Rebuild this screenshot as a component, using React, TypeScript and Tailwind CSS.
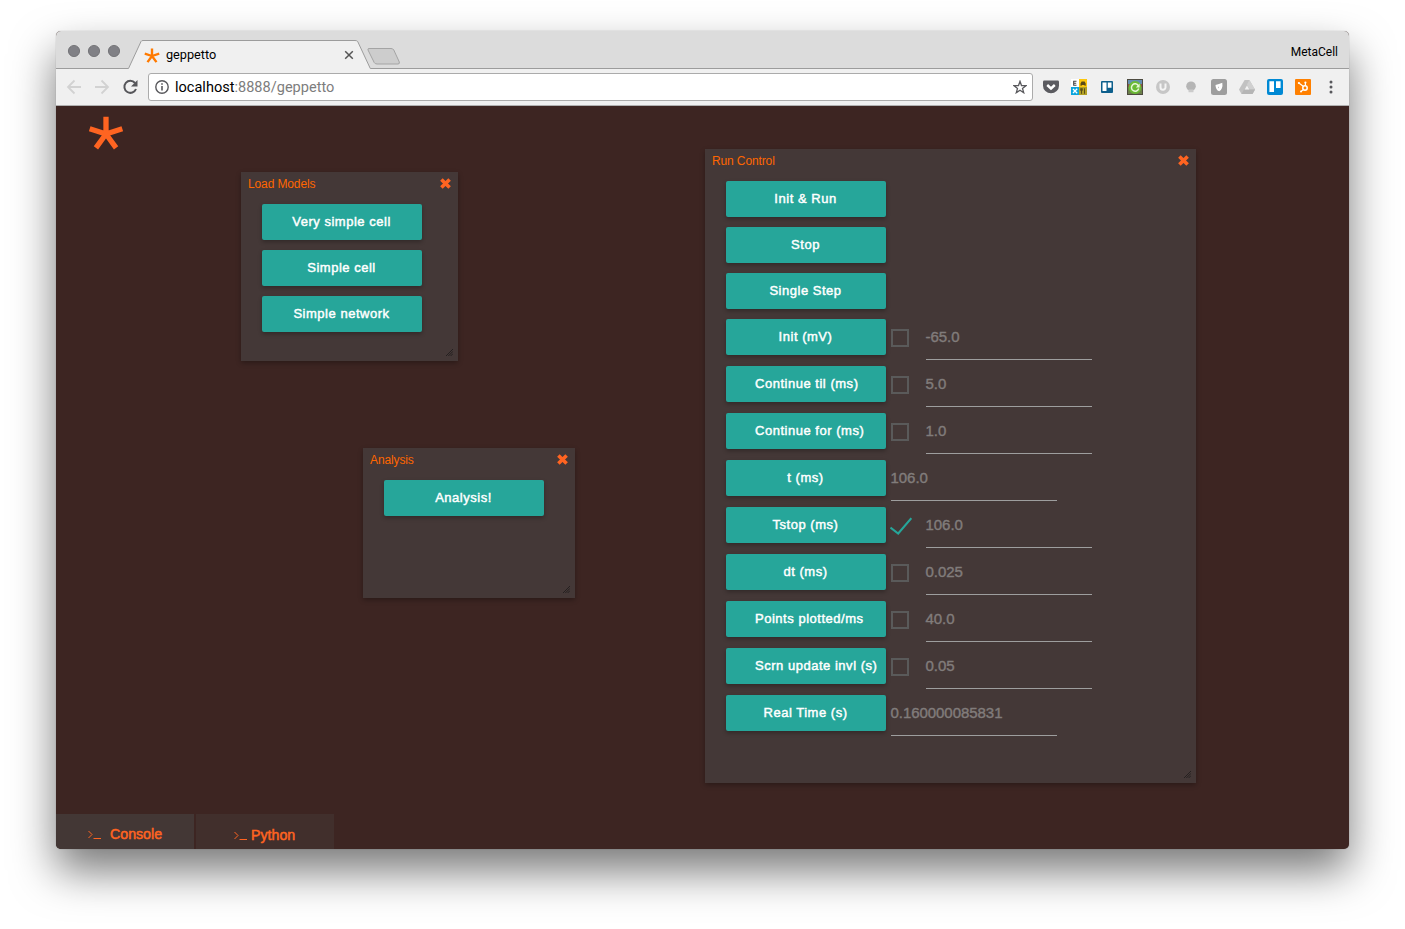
import React from "react";

const star = "M0 0V-1M0 0L.951 -.309M0 0L.588 .809M0 0L-.588 .809M0 0L-.951 -.309";

function Star({ className, width = 0.31 }: { className: string; width?: number }) {
  return (
    <svg className={className} viewBox="-1.05 -1.05 2.1 2.1" fill="none" stroke="currentColor" strokeWidth={width}>
      <path d={star} />
    </svg>
  );
}

function CloseX() {
  return (
    <svg className="h-[11px] w-[11px] text-[#ff6421]" viewBox="0 0 11 11" fill="none" stroke="currentColor" strokeWidth="3.6">
      <path d="M1.4 1.4L9.6 9.6M9.6 1.4L1.4 9.6" />
    </svg>
  );
}

function Grip() {
  return (
    <svg className="absolute right-[5px] bottom-[5px] h-[7px] w-[7px]" viewBox="0 0 7 7" stroke="#1d1b1b" strokeWidth="0.8">
      <path d="M0 7L7 0M2.3 7L7 2.3M4.6 7L7 4.6" />
    </svg>
  );
}

function Panel({ title, className, children }: { title: string; className: string; children: React.ReactNode }) {
  return (
    <section className={`absolute bg-[#443837] shadow-[0_2px_5px_rgba(0,0,0,0.3)] ${className}`}>
      <header className="flex h-[22px] items-center justify-between px-[7px] text-[#ff6600]">
        <h2 className="pt-[2px] text-[12px] leading-[22px] tracking-[-0.12px]">{title}</h2>
        <CloseX />
      </header>
      <div className="pt-[10px] pl-[21px]">{children}</div>
      <Grip />
    </section>
  );
}

function Button({ label }: { label: string }) {
  return (
    <button className="block h-[36px] w-[160px] shrink-0 rounded-[2px] bg-[#26a69a] pr-[30px] pl-[29px] text-center text-[13px] leading-[36px] tracking-[0.52px] whitespace-nowrap text-white shadow-[0_2px_4px_rgba(0,0,0,0.28)] [-webkit-text-stroke:0.45px_white]">
      {label}
    </button>
  );
}

function Row({ label, value, check }: { label: string; value: string; check?: "on" | "off" }) {
  return (
    <div className="flex h-[47px] items-start">
      <Button label={label} />
      {check === "off" && (
        <div className="mt-[10px] ml-[5px] h-[18px] w-[18px] shrink-0 border-2 border-[#5a5a5a]" />
      )}
      {check === "on" && (
        <svg className="mt-[10px] ml-[4px] h-[18px] w-[22px] shrink-0" viewBox="0 0 22 18" fill="none" stroke="#26a69a" strokeWidth="2">
          <path d="M0.5 10.5L8.2 16.5L21.3 1.2" />
        </svg>
      )}
      <div className={`${check === "on" ? "ml-[14px]" : check === "off" ? "ml-[17px]" : "ml-[5px]"} h-[41px] w-[166px] border-b border-[#9e9e9e] text-[15px] leading-[35px] tracking-[-0.05px] text-[#817c7b] [-webkit-text-stroke:0.4px_#817c7b]`}>
        <span className="-ml-[0.5px]">{value}</span>
      </div>
    </div>
  );
}

const rows: { label: string; value: string; check?: "on" | "off" }[] = [
  { label: "Init (mV)", value: "-65.0", check: "off" },
  { label: "Continue til (ms)", value: "5.0", check: "off" },
  { label: "Continue for (ms)", value: "1.0", check: "off" },
  { label: "t (ms)", value: "106.0" },
  { label: "Tstop (ms)", value: "106.0", check: "on" },
  { label: "dt (ms)", value: "0.025", check: "off" },
  { label: "Points plotted/ms", value: "40.0", check: "off" },
  { label: "Scrn update invl (s)", value: "0.05", check: "off" },
  { label: "Real Time (s)", value: "0.160000085831" },
];

function Extensions() {
  return (
    <div className="flex items-center gap-[12px]">
      <svg className="h-4 w-4" viewBox="0 0 16 16">
        <path d="M1.2 1.5h13.600q1.200 0 1.200 1.300v4a8 7.500 0 0 1-16 0V2.800q0-1.300 1.200-1.300z" fill="#5b5b60" />
        <path d="M4.2 6L8 9.5L11.8 6" fill="none" stroke="#fff" strokeWidth="2.4" />
      </svg>
      <svg className="h-4 w-4" viewBox="0 0 16 16">
        <path d="M0 0h8v8H0z" fill="#fff" />
        <path d="M8 0h8v8H8z" fill="#fdc70c" />
        <path d="M0 8h8v8H0z" fill="#0ba5dd" />
        <path d="M8 8h8v8H8z" fill="#b3a125" />
        <path d="M5.5 2.300H2.700v4h2.800M2.700 4.300h2.500" stroke="#444" fill="none" strokeWidth="1.1" />
        <path d="M9.500 6.700V4.400L10.600 2.500h3L14.700 4.400v2.300h-1.200V6h-2.800v.700z" fill="#5b4a18" />
        <path d="M2 10l4.200 4.200M6.200 9.800L2 14" stroke="#fff" strokeWidth="1.3" />
        <path d="M10.500 9.300v5.500M13.500 9.300v5.500M9.700 9.300v2.200h1.600V9.300" stroke="#594e19" fill="none" />
      </svg>
      <svg className="h-4 w-4" viewBox="0 0 16 16">
        <rect x="2" y="2" width="12" height="12" rx="1" fill="#0d5f8c" />
        <path d="M3.500 3.500h4v8.500h-4zM8.800 3.500h3.700v5.300H8.800z" fill="#fff" />
      </svg>
      <svg className="h-4 w-4" viewBox="0 0 16 16">
        <path d="M0 0h16v16H0z" fill="#4d4b40" />
        <path d="M1 1h14v4H1z" fill="#668fb1" />
        <path d="M1 5h14v10H1z" fill="#6c7f4b" />
        <path d="M1 5h1.500v3H1zM13.500 5H15v3h-1.500z" fill="#95504a" />
        <circle cx="8" cy="8.500" r="6.400" fill="#6abb35" />
        <path d="M11.300 6.600A3.700 3.700 0 1 0 11.700 9.500" stroke="#e6f7d8" strokeWidth="1.500" fill="none" />
        <path d="M12.600 4.600v4H8.800z" fill="#e6f7d8" />
      </svg>
      <svg className="h-4 w-4" viewBox="0 0 16 16">
        <circle cx="8" cy="8" r="7" fill="#c6c6c6" />
        <path d="M5.500 4.600v3.600a2.500 2.500 0 0 0 5 0V4.600" stroke="#f4f4f4" strokeWidth="2" fill="none" />
      </svg>
      <svg className="h-4 w-4" viewBox="0 0 16 16">
        <circle cx="8" cy="7.2" r="4.8" fill="#b5b5b5" />
        <path d="M5.500 10.500h5v2.700h-5z" fill="#cbcbcb" />
      </svg>
      <svg className="h-4 w-4" viewBox="0 0 16 16">
        <rect width="16" height="16" rx="2.5" fill="#9d9d9d" />
        <path d="M4.500 6Q8 5.200 11.300 3.700Q12.200 10 8.200 12.300Q4.600 11 4.500 6z" fill="#fff" />
        <path d="M7 7.500l1.200.800-1 1.200" fill="#bcbcbc" />
      </svg>
      <svg className="h-4 w-4" viewBox="0 0 16 16">
        <path d="M5.600 1h4.800L16 10.500 13.500 15h-11L0 10.500z" fill="#c2c2c2" />
        <path d="M10.400 1L16 10.500H10.800L8 5.400z" fill="#d0d0d0" />
        <path d="M5 10.500h11L13.500 15h-11z" fill="#b5b5b5" />
        <path d="M8 6.400L10.300 10.500H5.700z" fill="#f2f2f2" />
      </svg>
      <svg className="h-4 w-4" viewBox="0 0 16 16">
        <rect width="16" height="16" rx="2" fill="#0089d4" />
        <path d="M2.400 2.300h4.600v10.600H2.400zM9 2.300h4.600v6.800H9z" fill="#fff" />
      </svg>
      <svg className="h-4 w-4" viewBox="0 0 16 16">
        <rect width="16" height="16" rx="1" fill="#ff8000" />
        <g stroke="#fff" fill="none" strokeWidth="1.2">
          <circle cx="10" cy="9" r="2.2" strokeWidth="1.5" />
          <path d="M3.500 3.800L8.500 7.500M10.400 3.500v3.300M8.200 10.800L6 12.500" />
        </g>
        <circle cx="3.900" cy="4" r="1.1" fill="#fff" />
        <circle cx="10.400" cy="3.600" r="1.1" fill="#fff" />
        <circle cx="6" cy="12.400" r="1" fill="#fff" />
      </svg>
      <svg className="h-4 w-4" viewBox="0 0 16 16" fill="#58585c">
        <circle cx="8" cy="3.100" r="1.5" />
        <circle cx="8" cy="8" r="1.5" />
        <circle cx="8" cy="12.900" r="1.5" />
      </svg>
    </div>
  );
}

function Prompt() {
  return (
    <svg className="h-[9px] w-[13px]" viewBox="0 0 13 9" fill="none" stroke="currentColor">
      <path d="M.5 1L4 4.500.500 8M5.500 8.500H13" />
    </svg>
  );
}

export default function App() {
  return (
    <div className="h-[929px] w-[1405px] overflow-hidden bg-white pt-[31px] pl-[56px] font-['Liberation_Sans',sans-serif]">
      <div className="flex h-[818px] w-[1293px] flex-col overflow-hidden rounded-[5px] bg-[#3d2522] shadow-[0_0_1px_rgba(0,0,0,0.4),0_22px_44px_rgba(0,0,0,0.53)]">
        <div className="relative h-[38px] shrink-0 bg-[#dcdcdc]">
          <svg className="absolute inset-0 h-[38px] w-[1293px]" viewBox="0 0 1293 38">
            <path d="M0 37.500H72.500L85 10.500Q85.500 9.500 87 9.500H299Q301 9.500 301.700 10.500L314.300 37.500H1293V38H0z" fill="#f0f0f0" />
            <path d="M0 37.500H72.500L85 10.500Q85.500 9.500 87 9.500H299Q301 9.500 301.700 10.500L314.300 37.500H1293" fill="none" stroke="#9c9c9c" />
            <path d="M313 17.500H335Q337 17.500 337.800 19L343.300 31Q343.800 33 342 33H321Q319 33 318.200 31.500L312 19Q311.500 17.500 313 17.500z" fill="#cdcdcd" stroke="#a4a4a4" />
            <g fill="#808085" stroke="#68686c" strokeWidth=".8">
              <circle cx="18" cy="20" r="5.600" />
              <circle cx="38" cy="20" r="5.600" />
              <circle cx="58" cy="20" r="5.600" />
            </g>
            <path d="M289.200 20.200L296.800 27.800M296.800 20.200L289.200 27.800" stroke="#555" strokeWidth="1.500" />
          </svg>
          <div className="relative flex h-[38px] items-center pt-[10px] pl-[88px] font-['Roboto',sans-serif] text-black">
            <Star className="mt-px h-[16px] w-[16px] text-[#ff7a00]" width={0.31} />
            <span className="ml-[6px] text-[12.7px]">geppetto</span>
            <span className="mr-[11px] mb-[6px] ml-auto text-[12px]">MetaCell</span>
          </div>
        </div>
        <div className="flex h-[37px] shrink-0 items-center border-b border-[#b0b0b0] bg-[#f0f0f0] pl-[10px]">
          <svg className="h-[16px] w-[74px]" viewBox="0 0 74 16" fill="none">
            <g stroke="#d2d2d2" strokeWidth="1.8">
              <path d="M15 8H2M8.500 1.500L2 8l6.500 6.500" />
              <path d="M29 8H42M35.500 1.500L42 8l-6.500 6.500" />
            </g>
            <path d="M69 4A6 6 0 1 0 70 10" stroke="#56565a" strokeWidth="2" />
            <path d="M71.500 1V7.500H65z" fill="#56565a" />
          </svg>
          <div className="ml-[8px] flex h-[28px] w-[885px] items-center rounded-[3px] border border-[#ababab] bg-white pr-[5px] pl-[6px]">
            <svg className="h-[14px] w-[14px]" viewBox="0 0 14 14" fill="none" stroke="#58585c" strokeWidth="1.4">
              <circle cx="7" cy="7" r="6.200" />
              <path d="M7 6v4.500M7 3.300v1.500" strokeWidth="1.600" />
            </svg>
            <span className="ml-[6px] pt-[2px] font-['Roboto',sans-serif] text-[14.55px] text-black">
              localhost<span className="text-[#7d7d7d]">:8888/geppetto</span>
            </span>
            <svg className="ml-auto h-[14px] w-[14px]" viewBox="0 0 14 14" fill="none" stroke="#5a5a5e" strokeWidth="1.300">
              <path d="M7 1.300l1.500 4.200 4.600.100-3.600 2.800 1.200 4.300L7 10.200l-3.700 2.500 1.200-4.300-3.600-2.800 4.600-.100z" />
            </svg>
          </div>
          <div className="ml-[10px]">
            <Extensions />
          </div>
        </div>
        <main className="relative flex flex-1 flex-col">
          <Star className="mt-[10px] ml-[31.5px] h-[36px] w-[36px] text-[#ff6421]" />
          <Panel title="Load Models" className="top-[66px] left-[185px] h-[189px] w-[217px]">
            <div className="flex flex-col gap-[10px]">
              <Button label="Very simple cell" />
              <Button label="Simple cell" />
              <Button label="Simple network" />
            </div>
          </Panel>
          <Panel title="Analysis" className="top-[342px] left-[307px] h-[150px] w-[212px]">
            <Button label="Analysis!" />
          </Panel>
          <Panel title="Run Control" className="top-[43px] left-[649px] h-[634px] w-[491px]">
            <div className="mb-[10px] flex flex-col gap-[10px]">
              <Button label="Init &amp; Run" />
              <Button label="Stop" />
              <Button label="Single Step" />
            </div>
            {rows.map((row) => (
              <Row key={row.label} {...row} />
            ))}
          </Panel>
          <footer className="mt-auto flex h-[35px] gap-[2px] text-[14.2px] text-[#ff6421] [-webkit-text-stroke:0.5px_#ff6421]">
            <div className="flex w-[138px] items-center bg-[#433735] pt-[5px] pl-[32px]">
              <Prompt />
              <span className="ml-[9px] pt-[2px]">Console</span>
            </div>
            <div className="flex w-[138px] items-center bg-[#412f2c] pt-[7px] pl-[38px]">
              <Prompt />
              <span className="ml-[4px] pt-[2px]">Python</span>
            </div>
          </footer>
        </main>
      </div>
    </div>
  );
}
